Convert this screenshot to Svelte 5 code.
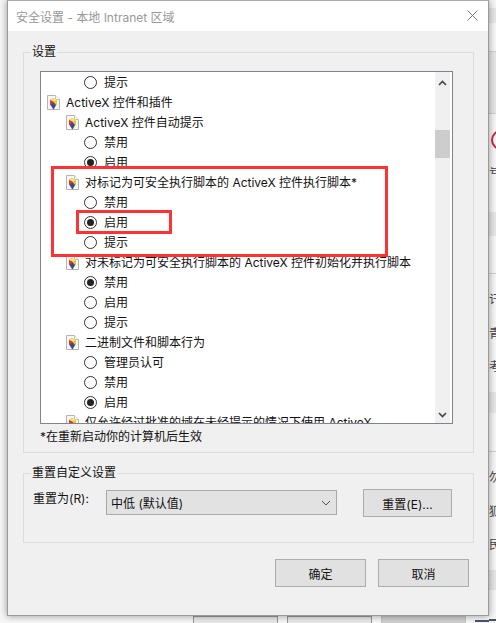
<script>
  const rows = [
    { kind: "radio", text: "提示" },
    { kind: "head", level: 0, text: "ActiveX 控件和插件" },
    { kind: "head", level: 1, text: "ActiveX 控件自动提示" },
    { kind: "radio", text: "禁用" },
    { kind: "radio", text: "启用", on: true },
    { kind: "head", level: 1, text: "对标记为可安全执行脚本的 ActiveX 控件执行脚本*" },
    { kind: "radio", text: "禁用" },
    { kind: "radio", text: "启用", on: true },
    { kind: "radio", text: "提示" },
    { kind: "head", level: 1, text: "对未标记为可安全执行脚本的 ActiveX 控件初始化并执行脚本" },
    { kind: "radio", text: "禁用", on: true },
    { kind: "radio", text: "启用" },
    { kind: "radio", text: "提示" },
    { kind: "head", level: 1, text: "二进制文件和脚本行为" },
    { kind: "radio", text: "管理员认可" },
    { kind: "radio", text: "禁用" },
    { kind: "radio", text: "启用", on: true },
    { kind: "head", level: 1, text: "仅允许经过批准的域在未经提示的情况下使用 ActiveX" }
  ];

  // what shows of the window behind the dialog, top to bottom
  const behind = [
    { h: 8 }, { h: 15, cls: "band" }, { h: 29, cls: "line" }, { h: 62, cls: "band line" },
    { h: 16 }, { h: 20, cls: "arc" }, { h: 17 }, { h: 9, text: "号手" },
    { h: 36 }, { h: 24, cls: "band" }, { h: 38, cls: "line" },
    { h: 19 }, { h: 14, text: "讦" }, { h: 20 }, { h: 14, text: "青" }, { h: 19 }, { h: 14, text: "考" },
    { h: 18 }, { h: 21, cls: "band" }, { h: 39, cls: "line" },
    { h: 19 }, { h: 14, text: "勿" }, { h: 20 }, { h: 14, text: "狐" }, { h: 19 }, { h: 14, text: "民" },
    { h: 18 }, { h: 20, cls: "band" }, { h: 29 }, { h: 2, cls: "bits" }
  ];
</script>

<div class="page">
  <div class="side"></div>
  <div class="dialog">
    <div class="title">
      <span>安全设置 - 本地 Intranet 区域</span>
      <svg class="close" width="11" height="11" viewBox="0 0 11 11"><path d="M.5.5l10 10M10.500.5l-10 10" stroke="#777" fill="none" /></svg>
    </div>
    <div class="content">
      <fieldset class="settings">
        <legend>设置</legend>
        <div class="listbox">
          <div class="rows">
            {#each rows as row}
              {#if row.kind === "radio"}
                <div class="row radio-row">
                  <span class="radio" class:on={row.on}></span>
                  <span class="label">{row.text}</span>
                </div>
              {:else}
                <div class="row" class:sub={row.level === 1}>
                  <svg class="doc" width="13" height="15" viewBox="0 0 13 15">
                    <path d="M.5.5h8l4 4v10H.5z" fill="#f7f7f4" stroke="#b4b4b4" />
                    <path d="M8.500.5v4h4" fill="#fff" stroke="#c4c4c4" />
                    <path d="M6.500 3l3.500 2v4.500l-3.500 5z" fill="#f8c61e" />
                    <path d="M6.500 3l-3.500 2v4.500l3.500 5z" fill="#e0362c" />
                    <path d="M6.500 7l2.500 3-2.500 4.500-2.500-4.500z" fill="#2a4cb0" />
                    <path d="M6.500 3l3.500 2-3.500 1.500-3.500-1.500z" fill="#fbe27a" />
                  </svg>
                  <span class="label">{row.text}</span>
                </div>
              {/if}
            {/each}
          </div>
          <div class="scrollbar">
            <svg width="9" height="6" viewBox="0 0 9 6"><path d="M1 5l3.500-3.500L8 5" stroke="#444" stroke-width="1.600" fill="none" /></svg>
            <div class="thumb"></div>
            <svg width="9" height="6" viewBox="0 0 9 6"><path d="M1 1l3.500 3.500L8 1" stroke="#444" stroke-width="1.600" fill="none" /></svg>
          </div>
          <div class="mark outer"></div>
          <div class="mark inner"></div>
        </div>
        <p class="note">*在重新启动你的计算机后生效</p>
      </fieldset>
      <fieldset class="reset">
        <legend>重置自定义设置</legend>
        <div class="reset-row">
          <span class="reset-label">重置为(R):</span>
          <div class="select">
            <span>中低 (默认值)</span>
            <svg width="10" height="6" viewBox="0 0 10 6"><path d="M1 1l4 4 4-4" stroke="#555" fill="none" /></svg>
          </div>
          <button class="reset-btn">重置(E)...</button>
        </div>
      </fieldset>
      <div class="actions">
        <button class="action">确定</button>
        <button class="action">取消</button>
      </div>
    </div>
  </div>
  <div class="side behind">
    {#each behind as part}
      <div class="part {part.cls ?? ''}" style="height: {part.h}px">{part.text ?? ""}</div>
    {/each}
  </div>
  <div class="bottom">
    <span class="under"></span>
    <span class="under"></span>
    <span class="under dark"></span>
    <span class="bits-left"></span>
  </div>
</div>

<style>
  :global(body) {
    margin: 0;
    background: #f6f6f6;
  }

  .page {
    width: 496px;
    height: 623px;
    overflow: hidden;
    font-family: "Inter", "Noto Sans CJK SC", sans-serif;
    font-size: 12px;
    color: #111;
    display: grid;
    grid-template-columns: 7px 482px 7px;
    grid-template-rows: 616px 7px;
  }

  .side {
    overflow: hidden;
  }

  .behind {
    grid-row: 1 / 3;
    grid-column: 3;
  }

  .part {
    box-sizing: border-box;
    overflow: hidden;
    white-space: nowrap;
    line-height: 12px;
    color: #444;
    display: flex;
    align-items: center;
    flex: none;
  }

  .part.band {
    background: #e6e6e6;
  }

  .part.line {
    border-bottom: 1px solid #cfcfcf;
  }

  .part.bits {
    background: #4a5468;
  }

  .part.arc {
    position: relative;
  }

  .part.arc::before {
    content: "";
    position: absolute;
    left: 2px;
    top: 0;
    width: 16px;
    height: 16px;
    border: 2px solid #c8264a;
    border-radius: 50%;
  }

  .dialog {
    position: relative;
    z-index: 1;
    box-sizing: border-box;
    border: 1px solid #9a9a9a;
    border-top-color: #aaa;
    background: #f0f0f0;
    box-shadow: 0 0 7px rgba(0, 0, 0, 0.4);
    display: flex;
    flex-direction: column;
  }

  .title {
    height: 30px;
    background: #fff;
    color: #999;
    display: flex;
    align-items: center;
    justify-content: space-between;
    padding: 0 10px 0 8px;
    flex: none;
  }

  .close {
    margin-top: -2px;
  }

  .content {
    padding: 13px 0 0 15px;
    flex: 1;
  }

  fieldset {
    margin: 0;
    padding: 0;
    border: 1px solid #dcdcdc;
    width: 451px;
    box-sizing: border-box;
  }

  legend {
    margin-left: 7px;
    padding: 0 1px;
    line-height: 16px;
  }

  .settings {
    height: 409px;
  }

  .listbox {
    position: relative;
    margin: 11px 0 0 16px;
    width: 413px;
    height: 353px;
    box-sizing: border-box;
    border: 1px solid #82828c;
    background: #fff;
    display: flex;
    overflow: hidden;
  }

  .rows {
    flex: 1;
    min-width: 0;
    overflow: hidden;
  }

  .row {
    height: 20px;
    display: flex;
    align-items: center;
    gap: 6px;
    padding-left: 6px;
    white-space: nowrap;
  }

  .row.sub {
    padding-left: 25px;
  }

  .radio-row {
    padding-left: 43px;
    gap: 7px;
  }

  .label {
    padding-bottom: 2px;
  }

  .doc {
    flex: none;
  }

  .radio {
    width: 11px;
    height: 11px;
    border: 1px solid #333;
    border-radius: 50%;
    background: #fff;
    position: relative;
    flex: none;
  }

  .radio.on::after {
    content: "";
    position: absolute;
    left: 2px;
    top: 2px;
    width: 7px;
    height: 7px;
    border-radius: 50%;
    background: #222;
  }

  .scrollbar {
    width: 15px;
    margin-right: 2px;
    background: #f0f0f0;
    flex: none;
    position: relative;
    display: flex;
    flex-direction: column;
    align-items: center;
    justify-content: space-between;
    padding: 8px 0 5px;
    box-sizing: border-box;
  }

  .thumb {
    position: absolute;
    left: 0;
    top: 58px;
    width: 100%;
    height: 28px;
    background: #cdcdcd;
  }

  .mark {
    position: absolute;
    box-sizing: border-box;
    border: 3px solid #ff3333;
    pointer-events: none;
  }

  .mark.outer {
    left: 10px;
    top: 94px;
    width: 337px;
    height: 91px;
  }

  .mark.inner {
    left: 35px;
    top: 138px;
    width: 96px;
    height: 24px;
  }

  .note {
    margin: 0 0 0 16px;
    padding-top: 5px;
    line-height: 16px;
  }

  .reset {
    height: 78px;
    margin-top: 12px;
  }

  .reset-row {
    display: flex;
    align-items: flex-start;
    padding: 9px 0 0 9px;
  }

  .reset-label {
    width: 73px;
    line-height: 16px;
    padding-top: 1px;
  }

  .select {
    width: 231px;
    height: 25px;
    box-sizing: border-box;
    border: 1px solid #a9a9a9;
    background: #e2e2e2;
    display: flex;
    align-items: center;
    justify-content: space-between;
    padding: 0 5px 0 4px;
  }

  button {
    font: inherit;
    color: #111;
    background: #e1e1e1;
    border: 1px solid #adadad;
    padding: 0;
    box-sizing: border-box;
  }

  .reset-btn {
    width: 89px;
    height: 28px;
    margin: -1px 0 0 26px;
  }

  .actions {
    display: flex;
    justify-content: flex-end;
    gap: 12px;
    margin-top: 16px;
    width: 446px;
  }

  .action {
    width: 91px;
    height: 28px;
  }

  .bottom {
    grid-column: 1 / 3;
    grid-row: 2;
    display: flex;
    gap: 9px;
    padding-left: 193px;
  }

  .under {
    width: 85px;
    height: 8px;
    box-sizing: border-box;
    border: 1px solid #999;
    background: #e8e8e8;
  }

  .under.dark {
    background: #cfcfcf;
    border-color: #c4c4c4;
  }

  .bits-left {
    width: 14px;
    height: 2px;
    margin-top: 4px;
    background: #4a5468;
  }
</style>
